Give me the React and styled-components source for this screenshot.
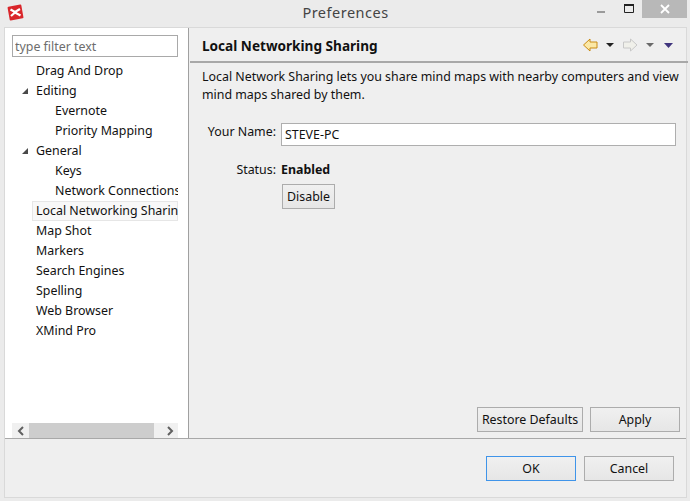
import React from "react";
import styled, { createGlobalStyle } from "styled-components";

const Global = createGlobalStyle`
  html, body { margin: 0; padding: 0; background: #ebebeb; }
  * { box-sizing: border-box; }
`;

const Window = styled.div`
  width: 690px;
  height: 501px;
  display: flex;
  flex-direction: column;
  background: #ebebeb;
  color: #111;
  font-family: "Noto Sans", sans-serif;
  font-size: 12.4px;
  overflow: hidden;
`;

const TitleBar = styled.div`
  height: 27px;
  flex: none;
  display: flex;
  padding-left: 7px;
  padding-right: 3px;
`;

const AppIcon = styled.svg`
  width: 17px;
  height: 17px;
  margin-top: 4px;
`;

const Title = styled.div`
  flex: 1;
  text-align: center;
  font-size: 14.5px;
  line-height: 25px;
  color: #444;
  letter-spacing: 0.5px;
  padding-left: 90px;
`;

const WinButtons = styled.div`
  display: flex;
`;

const WinButton = styled.div`
  width: ${(p) => p.$w}px;
  height: 18px;
  display: flex;
  align-items: center;
  justify-content: center;
  background: ${(p) => (p.$close ? "#b8b8b8" : "transparent")};
`;

const MinimizeGlyph = styled.svg`
  width: 10px;
  height: 3px;
  margin-top: 4px;
`;

const MaximizeGlyph = styled.svg`
  width: 12px;
  height: 12px;
  margin-left: -6px;
`;

const Frame = styled.div`
  flex: 1;
  margin: 0 3px 3px 4px;
  border: 1px solid #d9d9d9;
  display: flex;
  flex-direction: column;
  background: #efefef;
`;

const Body = styled.div`
  flex: 1;
  display: flex;
  min-height: 0;
  border-bottom: 1px solid #a8a8a8;
`;

const Sidebar = styled.div`
  width: 184px;
  flex: none;
  background: #fff;
  border-right: 1px solid #a0a0a0;
  padding: 7px 10px 0 7px;
  display: flex;
  flex-direction: column;
`;

const Filter = styled.input`
  height: 22px;
  width: 166px;
  flex: none;
  border: 1px solid #a9a9a9;
  padding: 0 2px;
  font: inherit;
  outline: none;
  &::placeholder { color: #6d6d6d; opacity: 1; }
`;

const Tree = styled.div`
  flex: 1;
  margin-top: 4px;
  position: relative;
  overflow: hidden;
`;

const Row = styled.div`
  height: 20px;
  line-height: 19px;
  white-space: nowrap;
  overflow: hidden;
  margin-left: 20px;
  padding-left: ${(p) => (p.$child ? 23 : 4)}px;
  background: ${(p) => (p.$selected ? "#f8f8f8" : "transparent")};
  box-shadow: ${(p) => (p.$selected ? "inset 0 0 0 1px #e6e6e6" : "none")};
`;

const Twisty = styled.span`
  position: absolute;
  left: 10px;
  top: ${(p) => p.$top}px;
  width: 0;
  height: 0;
  border-left: 6px solid transparent;
  border-bottom: 6px solid #4a4a4a;
`;

const HScroll = styled.div`
  height: 15px;
  flex: none;
  display: flex;
  align-items: center;
  background: #f0f0f0;
`;

const Arrow = styled.div`
  width: 17px;
  height: 15px;
  display: flex;
  align-items: center;
  justify-content: center;
`;

const Thumb = styled.div`
  flex: none;
  width: 125px;
  height: 15px;
  background: #cdcdcd;
`;

const Spacer = styled.div`
  flex: 1;
`;

const Content = styled.div`
  flex: 1;
  display: flex;
  flex-direction: column;
`;

const ContentHead = styled.div`
  height: 35px;
  flex: none;
  margin-left: 1px;
  border-bottom: 2px solid #a8a8a8;
  display: flex;
  align-items: center;
  padding: 0 5px 0 12px;
`;

const HeadTitle = styled.div`
  flex: 1;
  font-weight: 700;
  font-size: 13.6px;
  padding-top: 1px;
`;

const Nav = styled.svg`
  width: 100px;
  height: 16px;
`;

const Description = styled.p`
  margin: 5px 0 0 13px;
  line-height: 18px;
  width: 486px;
`;

const FormGrid = styled.div`
  margin-top: 19px;
  display: grid;
  grid-template-columns: 87px 1fr;
  column-gap: 5px;
  padding-right: 10px;
`;

const Label = styled.div`
  text-align: right;
  line-height: 18px;
  padding-top: ${(p) => p.$pt || 0}px;
`;

const NameInput = styled.input`
  height: 23px;
  width: 395px;
  border: 1px solid #aeaeae;
  background: #fff;
  padding: 0 3px;
  font: inherit;
  color: #111;
  outline: none;
`;

const StatusValue = styled.div`
  font-weight: 700;
  line-height: 18px;
  padding-top: 15px;
`;

const Button = styled.button`
  height: 25px;
  width: ${(p) => p.$w}px;
  border: 1px solid ${(p) => (p.$primary ? "#3f94e9" : "#acacac")};
  background: linear-gradient(#f0f0f0, #e6e6e6);
  font: inherit;
  color: #111;
  padding: 0;
`;

const DisableButton = styled(Button)`
  margin: 5px 0 0 1px;
`;

const ActionRow = styled.div`
  display: flex;
  justify-content: flex-end;
  gap: 7px;
  padding-right: 8px;
  padding-bottom: 6px;
`;

const Footer = styled.div`
  height: 58px;
  flex: none;
  display: flex;
  justify-content: flex-end;
  gap: 8px;
  padding: 17px 12px 0 0;
`;

const rows = [
  { label: "Drag And Drop" },
  { label: "Editing", open: true },
  { label: "Evernote", child: true },
  { label: "Priority Mapping", child: true },
  { label: "General", open: true },
  { label: "Keys", child: true },
  { label: "Network Connections", child: true },
  { label: "Local Networking Sharing", selected: true },
  { label: "Map Shot" },
  { label: "Markers" },
  { label: "Search Engines" },
  { label: "Spelling" },
  { label: "Web Browser" },
  { label: "XMind Pro" },
];

export default function App() {
  return (
    <Window>
      <Global />
      <TitleBar>
        <AppIcon viewBox="0 0 17 17">
          <rect x="1.5" y="1.5" width="14" height="14" rx="1" fill="#d9262b" transform="rotate(-10 8.5 8.5)" />
          <path d="M3.5 5.5 L8 8 L13 5 M4 12 L8 8.5 L13.5 11.5" stroke="#fff" strokeWidth="2.2" fill="none" />
        </AppIcon>
        <Title>Preferences</Title>
        <WinButtons>
          <WinButton $w={47}>
            <MinimizeGlyph><rect width="8" height="2" y="1" x="1" fill="#9a9a9a" /></MinimizeGlyph>
          </WinButton>
          <WinButton $w={18}>
            <MaximizeGlyph>
              <path d="M.5 1.5h9v8h-9z" fill="none" stroke="#222" />
              <path d="M0 1h10v2H0z" fill="#222" />
            </MaximizeGlyph>
          </WinButton>
          <WinButton $w={45} $close>
            <svg width="10" height="10"><path d="M1 1l8 8M9 1l-8 8" stroke="#fff" strokeWidth="1.8" /></svg>
          </WinButton>
        </WinButtons>
      </TitleBar>
      <Frame>
        <Body>
          <Sidebar>
            <Filter placeholder="type filter text" />
            <Tree>
              {rows.map((r, i) => (
                <React.Fragment key={r.label}>
                  {r.open && <Twisty $top={i * 20 + 7} />}
                  <Row $child={r.child} $selected={r.selected}>{r.label}</Row>
                </React.Fragment>
              ))}
            </Tree>
            <HScroll>
              <Arrow>
                <svg width="8" height="10"><path d="M6 1L2 5l4 4" stroke="#606060" strokeWidth="2" fill="none" /></svg>
              </Arrow>
              <Thumb />
              <Spacer />
              <Arrow>
                <svg width="8" height="10"><path d="M2 1l4 4-4 4" stroke="#606060" strokeWidth="2" fill="none" /></svg>
              </Arrow>
            </HScroll>
          </Sidebar>
          <Content>
            <ContentHead>
              <HeadTitle>Local Networking Sharing</HeadTitle>
              <Nav viewBox="0 0 100 16">
                <path d="M0.5 8 L7 2 V5 H14 V11 H7 V14 Z" fill="#fbe8a6" stroke="#c98a12" />
                <path d="M23 6h8l-4 4z" fill="#222" />
                <path d="M54 8 L47.5 2 V5 H40.500 V11 H47.500 V14 Z" fill="#f0f0ea" stroke="#c8c8c8" />
                <path d="M63 6h8l-4 4z" fill="#6a6a6a" />
                <path d="M81 6h9l-4.500 5z" fill="#40357e" />
              </Nav>
            </ContentHead>
            <Description>
              Local Network Sharing lets you share mind maps with nearby computers and view mind maps shared by them.
            </Description>
            <FormGrid>
              <Label>Your Name:</Label>
              <NameInput defaultValue="STEVE-PC" />
              <Label $pt={15}>Status:</Label>
              <StatusValue>Enabled</StatusValue>
              <span />
              <div><DisableButton $w={53}>Disable</DisableButton></div>
            </FormGrid>
            <Spacer />
            <ActionRow>
              <Button $w={106}>Restore Defaults</Button>
              <Button $w={90}>Apply</Button>
            </ActionRow>
          </Content>
        </Body>
        <Footer>
          <Button $w={90} $primary>OK</Button>
          <Button $w={90}>Cancel</Button>
        </Footer>
      </Frame>
    </Window>
  );
}
